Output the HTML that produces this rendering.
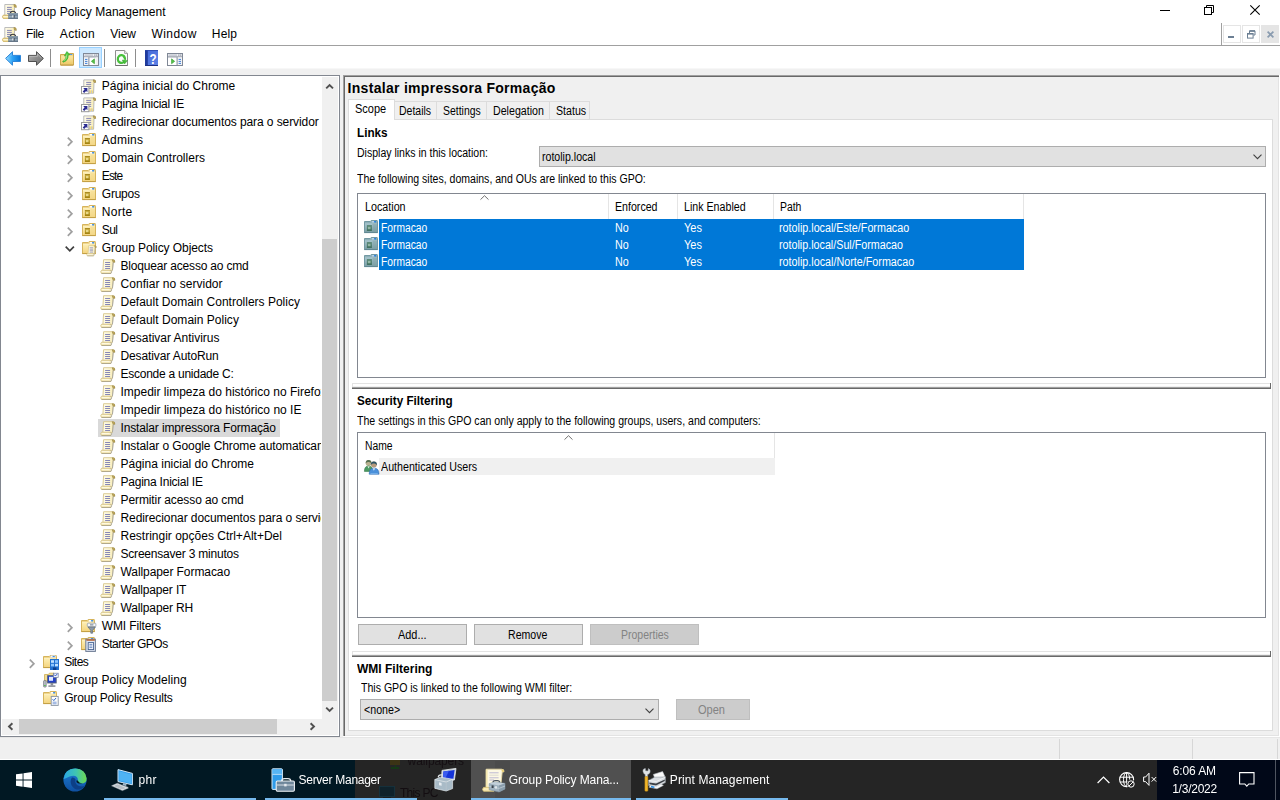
<!DOCTYPE html>
<html lang="pt">
<head>
<meta charset="utf-8">
<title>Group Policy Management</title>
<style>
html,body{margin:0;padding:0}
body{width:1280px;height:800px;overflow:hidden;position:relative;background:#f0f0f0;
 font-family:"Liberation Sans",sans-serif;font-size:12px;color:#000}
body>div{position:absolute;left:0;top:0;width:0;height:0}
body>div div,.i,.t{position:absolute;box-sizing:border-box}
.t{white-space:pre;line-height:16px;height:16px;margin:0;font-weight:400;font-size:12px;transform-origin:0 0}
.i{display:block;overflow:visible}
.clip{overflow:hidden}
#taskbar{will-change:transform}
</style>
</head>
<body>
<div id="title">
<svg class="i" width="0" height="0" style="left:0;top:0"><defs><linearGradient id="gfold" x1="0" y1="0" x2="0" y2="1"><stop offset="0" stop-color="#fdeeb4"/><stop offset="1" stop-color="#f4d580"/></linearGradient><linearGradient id="gfold2" x1="0" y1="0" x2="0" y2="1"><stop offset="0" stop-color="#a9c6cf"/><stop offset="1" stop-color="#7b9fa6"/></linearGradient><linearGradient id="gou" x1="0" y1="0" x2="0" y2="1"><stop offset="0" stop-color="#cfb040"/><stop offset="1" stop-color="#a07f0c"/></linearGradient><linearGradient id="gou2" x1="0" y1="0" x2="0" y2="1"><stop offset="0" stop-color="#5f8d7c"/><stop offset="1" stop-color="#3f6f5f"/></linearGradient><linearGradient id="gpaper" x1="0" y1="0" x2="1" y2="0"><stop offset="0" stop-color="#fefbea"/><stop offset="0.55" stop-color="#fcf5d2"/><stop offset="1" stop-color="#f7e9a6"/></linearGradient></defs></svg>
<div style="left:0px;top:0px;width:1280px;height:22px;background:#fff;"></div>
<svg class="i" style="left:2px;top:3px" width="16" height="16" viewBox="0 0 16 16" ><path d="M2.8 1.5 H11.6 Q14 1.3 13.8 3.6 L12.6 3.8 L12.2 12.6 H2.8 Z" fill="url(#gpaper)" stroke="#b6b6b6" stroke-width="0.9"/><path d="M11.8 1.5 Q14.8 1.2 14.3 4.4 L12.5 4 Z" fill="#cdb25c" stroke="#94803e" stroke-width="0.6"/><path d="M5 4.4H9.8M5 6.4H9.8M5 8.4H9.8M5 10.4H8" stroke="#8686b6" stroke-width="1"/><path d="M1.2 12.2 H7 V15.4 H1.2 Q-0.2 13.8 1.2 12.2 Z" fill="#f6e6a8" stroke="#c9a94f" stroke-width="0.8"/><path d="M1.4 13.6 H6.4" stroke="#fff7d6" stroke-width="1"/><path d="M8.3 10.4 Q8.5 8.3 11 8.3 Q13.4 8.3 13.7 10.4" fill="none" stroke="#3a3a3a" stroke-width="1.1"/><rect x="6.3" y="10.3" width="9.7" height="5.6" fill="#73879a"/><rect x="6.3" y="10.3" width="9.7" height="1.2" fill="#8497a8"/><rect x="6.9" y="13.1" width="8.5" height="1.3" fill="#9db0bf"/><rect x="6.3" y="15.2" width="9.7" height="0.8" fill="#5f7182"/><rect x="10.3" y="12.4" width="1.5" height="2" fill="#f4f6f8"/><rect x="11.6" y="12.2" width="1" height="2.6" fill="#39434d"/></svg>
<span class="t" style="left:22.8px;top:4px;letter-spacing:0.028px;">Group Policy Management</span>
<svg class="i" style="left:1160px;top:10px" width="10" height="1" viewBox="0 0 10 1" ><rect width="10" height="1" fill="#000"/></svg>
<svg class="i" style="left:1204px;top:5px" width="10" height="10" viewBox="0 0 10 10" ><path d="M2.5 2.5 V0.5 H9.5 V7.5 H7.5" fill="none" stroke="#000" stroke-width="1"/><rect x="0.5" y="2.5" width="7" height="7" fill="none" stroke="#000"/></svg>
<svg class="i" style="left:1250px;top:5px" width="10" height="10" viewBox="0 0 10 10" ><path d="M0.3 0.3 L9.7 9.7 M9.7 0.3 L0.3 9.7" stroke="#000" stroke-width="1.1"/></svg>
</div>
<div id="menu">
<div style="left:0px;top:22px;width:1280px;height:23px;background:#fff;"></div>
<div style="left:0px;top:45px;width:1280px;height:1px;background:#a0a0a0;"></div>
<svg class="i" style="left:2px;top:26px" width="16" height="16" viewBox="0 0 16 16" ><path d="M2.8 1.5 H11.6 Q14 1.3 13.8 3.6 L12.6 3.8 L12.2 12.6 H2.8 Z" fill="url(#gpaper)" stroke="#b6b6b6" stroke-width="0.9"/><path d="M11.8 1.5 Q14.8 1.2 14.3 4.4 L12.5 4 Z" fill="#cdb25c" stroke="#94803e" stroke-width="0.6"/><path d="M5 4.4H9.8M5 6.4H9.8M5 8.4H9.8M5 10.4H8" stroke="#8686b6" stroke-width="1"/><path d="M1.2 12.2 H7 V15.4 H1.2 Q-0.2 13.8 1.2 12.2 Z" fill="#f6e6a8" stroke="#c9a94f" stroke-width="0.8"/><path d="M1.4 13.6 H6.4" stroke="#fff7d6" stroke-width="1"/><path d="M8.3 10.4 Q8.5 8.3 11 8.3 Q13.4 8.3 13.7 10.4" fill="none" stroke="#3a3a3a" stroke-width="1.1"/><rect x="6.3" y="10.3" width="9.7" height="5.6" fill="#73879a"/><rect x="6.3" y="10.3" width="9.7" height="1.2" fill="#8497a8"/><rect x="6.9" y="13.1" width="8.5" height="1.3" fill="#9db0bf"/><rect x="6.3" y="15.2" width="9.7" height="0.8" fill="#5f7182"/><rect x="10.3" y="12.4" width="1.5" height="2" fill="#f4f6f8"/><rect x="11.6" y="12.2" width="1" height="2.6" fill="#39434d"/></svg>
<span class="t" style="left:26.0px;top:26px;letter-spacing:-0.381px;">File</span>
<span class="t" style="left:59.8px;top:26px;letter-spacing:0.328px;">Action</span>
<span class="t" style="left:110.2px;top:26px;">View</span>
<span class="t" style="left:151.5px;top:26px;letter-spacing:0.423px;">Window</span>
<span class="t" style="left:211.8px;top:26px;letter-spacing:0.171px;">Help</span>
<div style="left:1221px;top:23px;width:1px;height:23px;background:#a0a0a0;"></div>
<div style="left:1222px;top:23px;width:58px;height:22px;background:#fff;"></div>
<div style="left:1223px;top:25px;width:18px;height:18px;background:#fff;border:1px solid #e5e5e5;"></div>
<div style="left:1242px;top:25px;width:18px;height:18px;background:#fff;border:1px solid #e5e5e5;"></div>
<div style="left:1261px;top:25px;width:18px;height:18px;background:#e5e5e5;"></div>
<svg class="i" style="left:1228px;top:36px" width="6" height="2" viewBox="0 0 6 2" ><rect width="6" height="2" fill="#6b7f93"/></svg>
<svg class="i" style="left:1247px;top:30px" width="9" height="9" viewBox="0 0 9 9" ><path d="M2.5 3 V0.9 H8 V5 H6.4" fill="none" stroke="#6b7f93" stroke-width="1"/><path d="M2.5 1 H8" stroke="#6b7f93" stroke-width="1.6"/><rect x="0.5" y="3.5" width="5.6" height="4.6" fill="#fff" stroke="#6b7f93"/><path d="M0.5 3.8 H6.1" stroke="#6b7f93" stroke-width="1.6"/></svg>
<svg class="i" style="left:1267px;top:31px" width="7" height="7" viewBox="0 0 7 7" ><path d="M0.6 0.6 L6.4 6.4 M6.4 0.6 L0.6 6.4" stroke="#8a9cb0" stroke-width="1.7"/></svg>
</div>
<div id="toolbar">
<div style="left:0px;top:46px;width:1280px;height:22px;background:#fff;"></div>
<div style="left:0px;top:68px;width:1280px;height:1px;background:#f7f7f7;"></div>
<svg class="i" style="left:5px;top:51px" width="16" height="15" viewBox="0 0 16 15" ><defs><linearGradient id="gbk" x1="0" y1="0" x2="1" y2="0"><stop offset="0" stop-color="#9bdcff"/><stop offset="0.45" stop-color="#2fa5f7"/><stop offset="1" stop-color="#0672d6"/></linearGradient><linearGradient id="gbk2" x1="0" y1="0" x2="0" y2="1"><stop offset="0" stop-color="#fff" stop-opacity="0.55"/><stop offset="0.5" stop-color="#fff" stop-opacity="0"/></linearGradient></defs><path d="M0.6 7.4 L7.5 0.7 V4.4 H15.5 V10.5 H7.5 V14.2 Z" fill="url(#gbk)" stroke="#2f86d8" stroke-width="1" stroke-linejoin="round"/><path d="M2 7.4 L6.7 2.9 V5.3 H14.6 V7.4 Z" fill="url(#gbk2)"/></svg>
<svg class="i" style="left:28px;top:51px" width="16" height="15" viewBox="0 0 16 15" ><defs><linearGradient id="gfw" x1="0" y1="0" x2="1" y2="1"><stop offset="0" stop-color="#b9b9b9"/><stop offset="0.5" stop-color="#8e8e8e"/><stop offset="1" stop-color="#6f6f6f"/></linearGradient></defs><path d="M15.4 7.4 L8.5 0.7 V4.4 H0.5 V10.5 H8.5 V14.2 Z" fill="url(#gfw)" stroke="#4f4f4f" stroke-width="1" stroke-linejoin="round"/><path d="M1.5 5.4 H9.4 V3 L13.6 7.2" fill="none" stroke="#d0d0d0" stroke-width="0.7" opacity="0.7"/></svg>
<div style="left:50px;top:49px;width:1px;height:18px;background:#8d8d8d;"></div>
<svg class="i" style="left:60px;top:51px" width="14" height="15" viewBox="0 0 14 15" ><defs><linearGradient id="gup" x1="0" y1="0" x2="0" y2="1"><stop offset="0" stop-color="#fbe7a6"/><stop offset="1" stop-color="#edc968"/></linearGradient></defs><path d="M0.5 3.5 H8.6 L9.6 2.5 H13.5 V14 H0.5 Z" fill="#f0d88a" stroke="#cfa94e" stroke-width="1"/><path d="M1.2 5.2 H12.8 V13.3 H1.2 Z" fill="url(#gup)"/><path d="M0.6 14.1 H13.4" stroke="#b98f36" stroke-width="0.9"/><rect x="9.8" y="2.9" width="2.6" height="1.2" rx="0.5" fill="#4a9bf0"/><path d="M2.6 10.4 Q6 9 6.2 4.6 L4.4 5 L6.8 0.6 L10 3.6 L8.2 3.9 Q8.4 9.6 3.2 11.2 Z" fill="#52cf42" stroke="#2f9a2a" stroke-width="0.6" stroke-linejoin="round"/><path d="M4 9.8 Q6.8 8 6.9 3.4" fill="none" stroke="#b6f0a8" stroke-width="0.7"/></svg>
<div style="left:79px;top:47px;width:23px;height:21px;background:#cce8ff;border:1px solid #99d1ff;"></div>
<svg class="i" style="left:83px;top:53px" width="16" height="13" viewBox="0 0 16 13" ><rect x="0.5" y="0.5" width="15" height="12" fill="#fff" stroke="#808896" stroke-width="1"/><rect x="1" y="1" width="14" height="2.4" fill="#eceef2"/><path d="M1 3.9 H15" stroke="#808896" stroke-width="1"/><path d="M1.6 2.1 H10" stroke="#aab0bb" stroke-width="0.9"/><rect x="11.3" y="1.5" width="1.1" height="1.2" fill="#808896"/><rect x="13.2" y="1.5" width="1.1" height="1.2" fill="#808896"/><rect x="1" y="4.4" width="4.4" height="7.6" fill="#f3f4f7"/><path d="M5.9 4.3 V12.4" stroke="#808896" stroke-width="1"/><path d="M2 6.4H4.4M2 8.4H4.4M2 10.4H4.4" stroke="#3d7fd6" stroke-width="1"/><path d="M11.4 5.9 V10.7 L8.4 8.3 Z" fill="#58c24c" stroke="#35a02e" stroke-width="0.7" stroke-linejoin="round"/><rect x="12.6" y="4.4" width="2.4" height="7.6" fill="#f1f1f1"/></svg>
<div style="left:104px;top:49px;width:1px;height:18px;background:#8d8d8d;"></div>
<svg class="i" style="left:115px;top:50px" width="13" height="16" viewBox="0 0 13 16" ><path d="M0.5 0.5 H9.6 L12.5 3.4 V15.5 H0.5 Z" fill="#fbfbfb" stroke="#8e8e8e" stroke-width="1"/><path d="M9.6 0.5 V3.4 H12.5" fill="#ededed" stroke="#8e8e8e" stroke-width="0.8"/><path d="M0.5 15.5 H12.5" stroke="#6f6f6f" stroke-width="1"/><path d="M9.6 6.9 A3.7 3.9 0 1 0 9.9 10.6" fill="none" stroke="#48c03c" stroke-width="2.2"/><path d="M8.2 6 A3.6 3.6 0 0 1 9.9 9.8" fill="none" stroke="#48c03c" stroke-width="2.2"/><path d="M7.2 10 L12.6 10.4 L9.6 14 Z" fill="#48c03c" stroke="#2f9a2a" stroke-width="0.4"/></svg>
<div style="left:135px;top:49px;width:1px;height:18px;background:#8d8d8d;"></div>
<svg class="i" style="left:145px;top:50px" width="13" height="16" viewBox="0 0 13 16" ><defs><linearGradient id="ghp" x1="0" y1="0" x2="1" y2="1"><stop offset="0" stop-color="#4468d8"/><stop offset="1" stop-color="#5d82e6"/></linearGradient></defs><rect x="0" y="0" width="13" height="16" fill="url(#ghp)"/><rect x="0" y="0" width="2.8" height="16" fill="#1f3a9c"/><rect x="0" y="0" width="13" height="0.8" fill="#2a46ad"/><rect x="0" y="15" width="13" height="1" fill="#1c2f80"/><text x="10" y="14" font-family="Liberation Sans, sans-serif" font-weight="700" font-size="14.5" fill="#fff" text-anchor="middle" transform="scale(0.8,1)">?</text></svg>
<svg class="i" style="left:167px;top:53px" width="16" height="13" viewBox="0 0 16 13" ><rect x="0.5" y="0.5" width="15" height="12" fill="#fff" stroke="#808896" stroke-width="1"/><rect x="1" y="1" width="14" height="2.4" fill="#eceef2"/><path d="M1 3.9 H15" stroke="#808896" stroke-width="1"/><path d="M1.6 2.1 H10" stroke="#aab0bb" stroke-width="0.9"/><rect x="11.3" y="1.5" width="1.1" height="1.2" fill="#808896"/><rect x="13.2" y="1.5" width="1.1" height="1.2" fill="#808896"/><rect x="10.6" y="4.4" width="4.4" height="7.6" fill="#f3f4f7"/><path d="M10.1 4.3 V12.4" stroke="#808896" stroke-width="1"/><path d="M11.6 6.4H14M11.6 8.4H14M11.6 10.4H14" stroke="#3d7fd6" stroke-width="1"/><path d="M4.6 5.9 V10.7 L7.6 8.3 Z" fill="#58c24c" stroke="#35a02e" stroke-width="0.7" stroke-linejoin="round"/></svg>
</div>
<div id="tree">
<div style="left:0px;top:75px;width:340px;height:662px;background:#fff;border:1px solid #828790;"></div>
<div style="left:322px;top:77px;width:16px;height:642px;background:#f0f0f0;"></div>
<div style="left:322px;top:239px;width:15px;height:462px;background:#cdcdcd;"></div>
<svg class="i" style="left:325px;top:82.6px" width="9" height="7" viewBox="0 0 9 7" ><path d="M1.2 5.4 L4.6 2 L8 5.4" fill="none" stroke="#505050" stroke-width="1.9"/></svg>
<svg class="i" style="left:325px;top:706.4px" width="9" height="7" viewBox="0 0 9 7" ><path d="M1.2 1.6 L4.6 5 L8 1.6" fill="none" stroke="#505050" stroke-width="1.9"/></svg>
<div style="left:2px;top:719px;width:336px;height:16px;background:#f0f0f0;"></div>
<div style="left:19px;top:719px;width:258px;height:15px;background:#cdcdcd;"></div>
<svg class="i" style="left:6.6px;top:722px" width="7" height="9" viewBox="0 0 7 9" ><path d="M5.4 1.2 L2 4.5 L5.4 7.8" fill="none" stroke="#505050" stroke-width="1.9"/></svg>
<svg class="i" style="left:309px;top:722px" width="7" height="9" viewBox="0 0 7 9" ><path d="M1.6 1.2 L5 4.5 L1.6 7.8" fill="none" stroke="#505050" stroke-width="1.9"/></svg>
<div class="clip" style="left:1px;top:76px;width:320px;height:643px">
<svg class="i" style="left:80px;top:2px" width="16" height="16" viewBox="0 0 16 16" ><path d="M2.8 1.9 H12 Q14.6 1.6 14.4 4 L13 4.3 L12.6 15.2 H2.8 Z" fill="url(#gpaper)" stroke="#b2b2b2" stroke-width="0.9"/><path d="M12.3 1.8 Q15.1 1.4 14.6 4.5 L12.9 4.2 Z" fill="#cdb25c" stroke="#94803e" stroke-width="0.6"/><path d="M5.2 4.4H10.2M5.2 6.4H10.2M5.2 8.4H10.2M5.2 10.4H10.2" stroke="#8686b6" stroke-width="1"/><rect x="8.4" y="12.4" width="3.6" height="2.6" fill="#f5dc7c"/><rect x="10" y="12.6" width="1" height="2.4" fill="#c9c9c9"/><rect x="0.5" y="8.5" width="7.4" height="7.2" fill="#fff" stroke="#9b9b9b" stroke-width="1"/><path d="M2.2 10.1 H6.4 V14.3 L5.1 13 L3.2 14.9 L1.7 13.4 L3.6 11.5 Z" fill="#2b2b90"/></svg>
<span class="t" style="left:100.8px;top:2px;letter-spacing:0.004px;">Página inicial do Chrome</span>
<svg class="i" style="left:80px;top:20px" width="16" height="16" viewBox="0 0 16 16" ><path d="M2.8 1.9 H12 Q14.6 1.6 14.4 4 L13 4.3 L12.6 15.2 H2.8 Z" fill="url(#gpaper)" stroke="#b2b2b2" stroke-width="0.9"/><path d="M12.3 1.8 Q15.1 1.4 14.6 4.5 L12.9 4.2 Z" fill="#cdb25c" stroke="#94803e" stroke-width="0.6"/><path d="M5.2 4.4H10.2M5.2 6.4H10.2M5.2 8.4H10.2M5.2 10.4H10.2" stroke="#8686b6" stroke-width="1"/><rect x="8.4" y="12.4" width="3.6" height="2.6" fill="#f5dc7c"/><rect x="10" y="12.6" width="1" height="2.4" fill="#c9c9c9"/><rect x="0.5" y="8.5" width="7.4" height="7.2" fill="#fff" stroke="#9b9b9b" stroke-width="1"/><path d="M2.2 10.1 H6.4 V14.3 L5.1 13 L3.2 14.9 L1.7 13.4 L3.6 11.5 Z" fill="#2b2b90"/></svg>
<span class="t" style="left:100.8px;top:20px;letter-spacing:-0.229px;">Pagina Inicial IE</span>
<svg class="i" style="left:80px;top:38px" width="16" height="16" viewBox="0 0 16 16" ><path d="M2.8 1.9 H12 Q14.6 1.6 14.4 4 L13 4.3 L12.6 15.2 H2.8 Z" fill="url(#gpaper)" stroke="#b2b2b2" stroke-width="0.9"/><path d="M12.3 1.8 Q15.1 1.4 14.6 4.5 L12.9 4.2 Z" fill="#cdb25c" stroke="#94803e" stroke-width="0.6"/><path d="M5.2 4.4H10.2M5.2 6.4H10.2M5.2 8.4H10.2M5.2 10.4H10.2" stroke="#8686b6" stroke-width="1"/><rect x="8.4" y="12.4" width="3.6" height="2.6" fill="#f5dc7c"/><rect x="10" y="12.6" width="1" height="2.4" fill="#c9c9c9"/><rect x="0.5" y="8.5" width="7.4" height="7.2" fill="#fff" stroke="#9b9b9b" stroke-width="1"/><path d="M2.2 10.1 H6.4 V14.3 L5.1 13 L3.2 14.9 L1.7 13.4 L3.6 11.5 Z" fill="#2b2b90"/></svg>
<span class="t" style="left:100.8px;top:38px;letter-spacing:-0.082px;">Redirecionar documentos para o servidor</span>
<svg class="i" style="left:66px;top:61px" width="6" height="10" viewBox="0 0 6 10" ><path d="M0.8 0.6 L4.9 4.7 L0.8 8.8" fill="none" stroke="#a0a0a0" stroke-width="1.7"/></svg>
<svg class="i" style="left:80px;top:56px" width="16" height="16" viewBox="0 0 16 16" ><path d="M1.5 2.5 H7.2 L8.2 1.5 H14 Q14.5 1.5 14.5 2.3 V13.5 H1.5 Z" fill="#efd488" stroke="#d6b45c" stroke-width="1"/><path d="M2 4.3 H14 V13 H2 Z" fill="url(#gfold)"/><path d="M9.6 4.6 H14 V13 H9.6 Z" fill="#f3d88c" opacity="0.55"/><path d="M2 4.4 H7.6 L8.4 3.9 H14" fill="none" stroke="#fff6cf" stroke-width="0.7"/><path d="M1.2 13.6 H14.8" stroke="#c39f45" stroke-width="1"/><rect x="8.8" y="2.1" width="3.2" height="1.4" rx="0.5" fill="#fff"/><rect x="11" y="2.1" width="2.2" height="1.4" rx="0.6" fill="#3d8ee6"/><rect x="3.9" y="6" width="5" height="6" fill="url(#gou)"/><rect x="3.9" y="6" width="5" height="0.8" fill="#8f7210" opacity="0.7"/><rect x="4.9" y="7.8" width="2.6" height="2.4" fill="#f2e49a" opacity="0.85"/></svg>
<span class="t" style="left:100.8px;top:56px;letter-spacing:0.237px;">Admins</span>
<svg class="i" style="left:66px;top:79px" width="6" height="10" viewBox="0 0 6 10" ><path d="M0.8 0.6 L4.9 4.7 L0.8 8.8" fill="none" stroke="#a0a0a0" stroke-width="1.7"/></svg>
<svg class="i" style="left:80px;top:74px" width="16" height="16" viewBox="0 0 16 16" ><path d="M1.5 2.5 H7.2 L8.2 1.5 H14 Q14.5 1.5 14.5 2.3 V13.5 H1.5 Z" fill="#efd488" stroke="#d6b45c" stroke-width="1"/><path d="M2 4.3 H14 V13 H2 Z" fill="url(#gfold)"/><path d="M9.6 4.6 H14 V13 H9.6 Z" fill="#f3d88c" opacity="0.55"/><path d="M2 4.4 H7.6 L8.4 3.9 H14" fill="none" stroke="#fff6cf" stroke-width="0.7"/><path d="M1.2 13.6 H14.8" stroke="#c39f45" stroke-width="1"/><rect x="8.8" y="2.1" width="3.2" height="1.4" rx="0.5" fill="#fff"/><rect x="11" y="2.1" width="2.2" height="1.4" rx="0.6" fill="#3d8ee6"/><rect x="3.9" y="6" width="5" height="6" fill="url(#gou)"/><rect x="3.9" y="6" width="5" height="0.8" fill="#8f7210" opacity="0.7"/><rect x="4.9" y="7.8" width="2.6" height="2.4" fill="#f2e49a" opacity="0.85"/></svg>
<span class="t" style="left:100.8px;top:74px;letter-spacing:0.029px;">Domain Controllers</span>
<svg class="i" style="left:66px;top:97px" width="6" height="10" viewBox="0 0 6 10" ><path d="M0.8 0.6 L4.9 4.7 L0.8 8.8" fill="none" stroke="#a0a0a0" stroke-width="1.7"/></svg>
<svg class="i" style="left:80px;top:92px" width="16" height="16" viewBox="0 0 16 16" ><path d="M1.5 2.5 H7.2 L8.2 1.5 H14 Q14.5 1.5 14.5 2.3 V13.5 H1.5 Z" fill="#efd488" stroke="#d6b45c" stroke-width="1"/><path d="M2 4.3 H14 V13 H2 Z" fill="url(#gfold)"/><path d="M9.6 4.6 H14 V13 H9.6 Z" fill="#f3d88c" opacity="0.55"/><path d="M2 4.4 H7.6 L8.4 3.9 H14" fill="none" stroke="#fff6cf" stroke-width="0.7"/><path d="M1.2 13.6 H14.8" stroke="#c39f45" stroke-width="1"/><rect x="8.8" y="2.1" width="3.2" height="1.4" rx="0.5" fill="#fff"/><rect x="11" y="2.1" width="2.2" height="1.4" rx="0.6" fill="#3d8ee6"/><rect x="3.9" y="6" width="5" height="6" fill="url(#gou)"/><rect x="3.9" y="6" width="5" height="0.8" fill="#8f7210" opacity="0.7"/><rect x="4.9" y="7.8" width="2.6" height="2.4" fill="#f2e49a" opacity="0.85"/></svg>
<span class="t" style="left:100.8px;top:92px;letter-spacing:-0.839px;">Este</span>
<svg class="i" style="left:66px;top:115px" width="6" height="10" viewBox="0 0 6 10" ><path d="M0.8 0.6 L4.9 4.7 L0.8 8.8" fill="none" stroke="#a0a0a0" stroke-width="1.7"/></svg>
<svg class="i" style="left:80px;top:110px" width="16" height="16" viewBox="0 0 16 16" ><path d="M1.5 2.5 H7.2 L8.2 1.5 H14 Q14.5 1.5 14.5 2.3 V13.5 H1.5 Z" fill="#efd488" stroke="#d6b45c" stroke-width="1"/><path d="M2 4.3 H14 V13 H2 Z" fill="url(#gfold)"/><path d="M9.6 4.6 H14 V13 H9.6 Z" fill="#f3d88c" opacity="0.55"/><path d="M2 4.4 H7.6 L8.4 3.9 H14" fill="none" stroke="#fff6cf" stroke-width="0.7"/><path d="M1.2 13.6 H14.8" stroke="#c39f45" stroke-width="1"/><rect x="8.8" y="2.1" width="3.2" height="1.4" rx="0.5" fill="#fff"/><rect x="11" y="2.1" width="2.2" height="1.4" rx="0.6" fill="#3d8ee6"/><rect x="3.9" y="6" width="5" height="6" fill="url(#gou)"/><rect x="3.9" y="6" width="5" height="0.8" fill="#8f7210" opacity="0.7"/><rect x="4.9" y="7.8" width="2.6" height="2.4" fill="#f2e49a" opacity="0.85"/></svg>
<span class="t" style="left:100.8px;top:110px;letter-spacing:-0.232px;">Grupos</span>
<svg class="i" style="left:66px;top:133px" width="6" height="10" viewBox="0 0 6 10" ><path d="M0.8 0.6 L4.9 4.7 L0.8 8.8" fill="none" stroke="#a0a0a0" stroke-width="1.7"/></svg>
<svg class="i" style="left:80px;top:128px" width="16" height="16" viewBox="0 0 16 16" ><path d="M1.5 2.5 H7.2 L8.2 1.5 H14 Q14.5 1.5 14.5 2.3 V13.5 H1.5 Z" fill="#efd488" stroke="#d6b45c" stroke-width="1"/><path d="M2 4.3 H14 V13 H2 Z" fill="url(#gfold)"/><path d="M9.6 4.6 H14 V13 H9.6 Z" fill="#f3d88c" opacity="0.55"/><path d="M2 4.4 H7.6 L8.4 3.9 H14" fill="none" stroke="#fff6cf" stroke-width="0.7"/><path d="M1.2 13.6 H14.8" stroke="#c39f45" stroke-width="1"/><rect x="8.8" y="2.1" width="3.2" height="1.4" rx="0.5" fill="#fff"/><rect x="11" y="2.1" width="2.2" height="1.4" rx="0.6" fill="#3d8ee6"/><rect x="3.9" y="6" width="5" height="6" fill="url(#gou)"/><rect x="3.9" y="6" width="5" height="0.8" fill="#8f7210" opacity="0.7"/><rect x="4.9" y="7.8" width="2.6" height="2.4" fill="#f2e49a" opacity="0.85"/></svg>
<span class="t" style="left:100.8px;top:128px;letter-spacing:0.289px;">Norte</span>
<svg class="i" style="left:66px;top:151px" width="6" height="10" viewBox="0 0 6 10" ><path d="M0.8 0.6 L4.9 4.7 L0.8 8.8" fill="none" stroke="#a0a0a0" stroke-width="1.7"/></svg>
<svg class="i" style="left:80px;top:146px" width="16" height="16" viewBox="0 0 16 16" ><path d="M1.5 2.5 H7.2 L8.2 1.5 H14 Q14.5 1.5 14.5 2.3 V13.5 H1.5 Z" fill="#efd488" stroke="#d6b45c" stroke-width="1"/><path d="M2 4.3 H14 V13 H2 Z" fill="url(#gfold)"/><path d="M9.6 4.6 H14 V13 H9.6 Z" fill="#f3d88c" opacity="0.55"/><path d="M2 4.4 H7.6 L8.4 3.9 H14" fill="none" stroke="#fff6cf" stroke-width="0.7"/><path d="M1.2 13.6 H14.8" stroke="#c39f45" stroke-width="1"/><rect x="8.8" y="2.1" width="3.2" height="1.4" rx="0.5" fill="#fff"/><rect x="11" y="2.1" width="2.2" height="1.4" rx="0.6" fill="#3d8ee6"/><rect x="3.9" y="6" width="5" height="6" fill="url(#gou)"/><rect x="3.9" y="6" width="5" height="0.8" fill="#8f7210" opacity="0.7"/><rect x="4.9" y="7.8" width="2.6" height="2.4" fill="#f2e49a" opacity="0.85"/></svg>
<span class="t" style="left:100.8px;top:146px;letter-spacing:-0.672px;">Sul</span>
<svg class="i" style="left:63.8px;top:170.1px" width="10" height="6" viewBox="0 0 10 6" ><path d="M0.7 0.7 L4.8 4.8 L8.9 0.7" fill="none" stroke="#404040" stroke-width="1.7"/></svg>
<svg class="i" style="left:80px;top:164px" width="16" height="16" viewBox="0 0 16 16" ><path d="M1.5 2.5 H7.2 L8.2 1.5 H14 Q14.5 1.5 14.5 2.3 V13.5 H1.5 Z" fill="#efd488" stroke="#d6b45c" stroke-width="1"/><path d="M2 4.3 H14 V13 H2 Z" fill="url(#gfold)"/><path d="M9.6 4.6 H14 V13 H9.6 Z" fill="#f3d88c" opacity="0.55"/><path d="M2 4.4 H7.6 L8.4 3.9 H14" fill="none" stroke="#fff6cf" stroke-width="0.7"/><path d="M1.2 13.6 H14.8" stroke="#c39f45" stroke-width="1"/><rect x="8.8" y="2.1" width="3.2" height="1.4" rx="0.5" fill="#fff"/><rect x="11" y="2.1" width="2.2" height="1.4" rx="0.6" fill="#3d8ee6"/><g transform="translate(5.2,4.4) scale(0.68,0.74)"><path d="M3.6 1.7 H12.4 Q14.9 1.4 14.7 3.9 L13.2 4.1 L12.4 12.4 H2.9 Z" fill="url(#gpaper)" stroke="#d2bf7e" stroke-width="0.8"/><path d="M13.25 4.1 L12.45 12.3" stroke="#a5a5a5" stroke-width="0.9"/><path d="M12.3 1.7 Q15.2 1.3 14.8 4.3 L13 4 Z" fill="#d3b862" stroke="#8f7d40" stroke-width="0.6"/><path d="M5.1 4.5H10.1M5.1 6.5H10.1M5.1 8.5H10.1M5.1 10.5H10.1" stroke="#8888b6" stroke-width="1"/><path d="M1.5 12.3 H11 Q12.4 13.8 11 15.4 H1.5 Q-0.1 13.8 1.5 12.3 Z" fill="#f9edbd" stroke="#d2bf7e" stroke-width="0.8"/><path d="M1.8 13.4 H9.6" stroke="#fffbe8" stroke-width="0.9"/><path d="M1.6 15.5 H11" stroke="#a79f86" stroke-width="0.8"/><path d="M10.9 12.5 Q12.3 13.8 10.9 15.3" fill="#e9e9e9" stroke="#9c9c9c" stroke-width="0.7"/></g></svg>
<span class="t" style="left:100.8px;top:164px;letter-spacing:-0.080px;">Group Policy Objects</span>
<svg class="i" style="left:99px;top:182px" width="16" height="16" viewBox="0 0 16 16" ><path d="M3.6 1.7 H12.4 Q14.9 1.4 14.7 3.9 L13.2 4.1 L12.4 12.4 H2.9 Z" fill="url(#gpaper)" stroke="#d2bf7e" stroke-width="0.8"/><path d="M13.25 4.1 L12.45 12.3" stroke="#a5a5a5" stroke-width="0.9"/><path d="M12.3 1.7 Q15.2 1.3 14.8 4.3 L13 4 Z" fill="#d3b862" stroke="#8f7d40" stroke-width="0.6"/><path d="M5.1 4.5H10.1M5.1 6.5H10.1M5.1 8.5H10.1M5.1 10.5H10.1" stroke="#8888b6" stroke-width="1"/><path d="M1.5 12.3 H11 Q12.4 13.8 11 15.4 H1.5 Q-0.1 13.8 1.5 12.3 Z" fill="#f9edbd" stroke="#d2bf7e" stroke-width="0.8"/><path d="M1.8 13.4 H9.6" stroke="#fffbe8" stroke-width="0.9"/><path d="M1.6 15.5 H11" stroke="#a79f86" stroke-width="0.8"/><path d="M10.9 12.5 Q12.3 13.8 10.9 15.3" fill="#e9e9e9" stroke="#9c9c9c" stroke-width="0.7"/></svg>
<span class="t" style="left:119.5px;top:182px;letter-spacing:-0.180px;">Bloquear acesso ao cmd</span>
<svg class="i" style="left:99px;top:200px" width="16" height="16" viewBox="0 0 16 16" ><path d="M3.6 1.7 H12.4 Q14.9 1.4 14.7 3.9 L13.2 4.1 L12.4 12.4 H2.9 Z" fill="url(#gpaper)" stroke="#d2bf7e" stroke-width="0.8"/><path d="M13.25 4.1 L12.45 12.3" stroke="#a5a5a5" stroke-width="0.9"/><path d="M12.3 1.7 Q15.2 1.3 14.8 4.3 L13 4 Z" fill="#d3b862" stroke="#8f7d40" stroke-width="0.6"/><path d="M5.1 4.5H10.1M5.1 6.5H10.1M5.1 8.5H10.1M5.1 10.5H10.1" stroke="#8888b6" stroke-width="1"/><path d="M1.5 12.3 H11 Q12.4 13.8 11 15.4 H1.5 Q-0.1 13.8 1.5 12.3 Z" fill="#f9edbd" stroke="#d2bf7e" stroke-width="0.8"/><path d="M1.8 13.4 H9.6" stroke="#fffbe8" stroke-width="0.9"/><path d="M1.6 15.5 H11" stroke="#a79f86" stroke-width="0.8"/><path d="M10.9 12.5 Q12.3 13.8 10.9 15.3" fill="#e9e9e9" stroke="#9c9c9c" stroke-width="0.7"/></svg>
<span class="t" style="left:119.5px;top:200px;letter-spacing:0.039px;">Confiar no servidor</span>
<svg class="i" style="left:99px;top:218px" width="16" height="16" viewBox="0 0 16 16" ><path d="M3.6 1.7 H12.4 Q14.9 1.4 14.7 3.9 L13.2 4.1 L12.4 12.4 H2.9 Z" fill="url(#gpaper)" stroke="#d2bf7e" stroke-width="0.8"/><path d="M13.25 4.1 L12.45 12.3" stroke="#a5a5a5" stroke-width="0.9"/><path d="M12.3 1.7 Q15.2 1.3 14.8 4.3 L13 4 Z" fill="#d3b862" stroke="#8f7d40" stroke-width="0.6"/><path d="M5.1 4.5H10.1M5.1 6.5H10.1M5.1 8.5H10.1M5.1 10.5H10.1" stroke="#8888b6" stroke-width="1"/><path d="M1.5 12.3 H11 Q12.4 13.8 11 15.4 H1.5 Q-0.1 13.8 1.5 12.3 Z" fill="#f9edbd" stroke="#d2bf7e" stroke-width="0.8"/><path d="M1.8 13.4 H9.6" stroke="#fffbe8" stroke-width="0.9"/><path d="M1.6 15.5 H11" stroke="#a79f86" stroke-width="0.8"/><path d="M10.9 12.5 Q12.3 13.8 10.9 15.3" fill="#e9e9e9" stroke="#9c9c9c" stroke-width="0.7"/></svg>
<span class="t" style="left:119.5px;top:218px;">Default Domain Controllers Policy</span>
<svg class="i" style="left:99px;top:236px" width="16" height="16" viewBox="0 0 16 16" ><path d="M3.6 1.7 H12.4 Q14.9 1.4 14.7 3.9 L13.2 4.1 L12.4 12.4 H2.9 Z" fill="url(#gpaper)" stroke="#d2bf7e" stroke-width="0.8"/><path d="M13.25 4.1 L12.45 12.3" stroke="#a5a5a5" stroke-width="0.9"/><path d="M12.3 1.7 Q15.2 1.3 14.8 4.3 L13 4 Z" fill="#d3b862" stroke="#8f7d40" stroke-width="0.6"/><path d="M5.1 4.5H10.1M5.1 6.5H10.1M5.1 8.5H10.1M5.1 10.5H10.1" stroke="#8888b6" stroke-width="1"/><path d="M1.5 12.3 H11 Q12.4 13.8 11 15.4 H1.5 Q-0.1 13.8 1.5 12.3 Z" fill="#f9edbd" stroke="#d2bf7e" stroke-width="0.8"/><path d="M1.8 13.4 H9.6" stroke="#fffbe8" stroke-width="0.9"/><path d="M1.6 15.5 H11" stroke="#a79f86" stroke-width="0.8"/><path d="M10.9 12.5 Q12.3 13.8 10.9 15.3" fill="#e9e9e9" stroke="#9c9c9c" stroke-width="0.7"/></svg>
<span class="t" style="left:119.5px;top:236px;letter-spacing:0.017px;">Default Domain Policy</span>
<svg class="i" style="left:99px;top:254px" width="16" height="16" viewBox="0 0 16 16" ><path d="M3.6 1.7 H12.4 Q14.9 1.4 14.7 3.9 L13.2 4.1 L12.4 12.4 H2.9 Z" fill="url(#gpaper)" stroke="#d2bf7e" stroke-width="0.8"/><path d="M13.25 4.1 L12.45 12.3" stroke="#a5a5a5" stroke-width="0.9"/><path d="M12.3 1.7 Q15.2 1.3 14.8 4.3 L13 4 Z" fill="#d3b862" stroke="#8f7d40" stroke-width="0.6"/><path d="M5.1 4.5H10.1M5.1 6.5H10.1M5.1 8.5H10.1M5.1 10.5H10.1" stroke="#8888b6" stroke-width="1"/><path d="M1.5 12.3 H11 Q12.4 13.8 11 15.4 H1.5 Q-0.1 13.8 1.5 12.3 Z" fill="#f9edbd" stroke="#d2bf7e" stroke-width="0.8"/><path d="M1.8 13.4 H9.6" stroke="#fffbe8" stroke-width="0.9"/><path d="M1.6 15.5 H11" stroke="#a79f86" stroke-width="0.8"/><path d="M10.9 12.5 Q12.3 13.8 10.9 15.3" fill="#e9e9e9" stroke="#9c9c9c" stroke-width="0.7"/></svg>
<span class="t" style="left:119.5px;top:254px;letter-spacing:-0.026px;">Desativar Antivirus</span>
<svg class="i" style="left:99px;top:272px" width="16" height="16" viewBox="0 0 16 16" ><path d="M3.6 1.7 H12.4 Q14.9 1.4 14.7 3.9 L13.2 4.1 L12.4 12.4 H2.9 Z" fill="url(#gpaper)" stroke="#d2bf7e" stroke-width="0.8"/><path d="M13.25 4.1 L12.45 12.3" stroke="#a5a5a5" stroke-width="0.9"/><path d="M12.3 1.7 Q15.2 1.3 14.8 4.3 L13 4 Z" fill="#d3b862" stroke="#8f7d40" stroke-width="0.6"/><path d="M5.1 4.5H10.1M5.1 6.5H10.1M5.1 8.5H10.1M5.1 10.5H10.1" stroke="#8888b6" stroke-width="1"/><path d="M1.5 12.3 H11 Q12.4 13.8 11 15.4 H1.5 Q-0.1 13.8 1.5 12.3 Z" fill="#f9edbd" stroke="#d2bf7e" stroke-width="0.8"/><path d="M1.8 13.4 H9.6" stroke="#fffbe8" stroke-width="0.9"/><path d="M1.6 15.5 H11" stroke="#a79f86" stroke-width="0.8"/><path d="M10.9 12.5 Q12.3 13.8 10.9 15.3" fill="#e9e9e9" stroke="#9c9c9c" stroke-width="0.7"/></svg>
<span class="t" style="left:119.5px;top:272px;letter-spacing:-0.110px;">Desativar AutoRun</span>
<svg class="i" style="left:99px;top:290px" width="16" height="16" viewBox="0 0 16 16" ><path d="M3.6 1.7 H12.4 Q14.9 1.4 14.7 3.9 L13.2 4.1 L12.4 12.4 H2.9 Z" fill="url(#gpaper)" stroke="#d2bf7e" stroke-width="0.8"/><path d="M13.25 4.1 L12.45 12.3" stroke="#a5a5a5" stroke-width="0.9"/><path d="M12.3 1.7 Q15.2 1.3 14.8 4.3 L13 4 Z" fill="#d3b862" stroke="#8f7d40" stroke-width="0.6"/><path d="M5.1 4.5H10.1M5.1 6.5H10.1M5.1 8.5H10.1M5.1 10.5H10.1" stroke="#8888b6" stroke-width="1"/><path d="M1.5 12.3 H11 Q12.4 13.8 11 15.4 H1.5 Q-0.1 13.8 1.5 12.3 Z" fill="#f9edbd" stroke="#d2bf7e" stroke-width="0.8"/><path d="M1.8 13.4 H9.6" stroke="#fffbe8" stroke-width="0.9"/><path d="M1.6 15.5 H11" stroke="#a79f86" stroke-width="0.8"/><path d="M10.9 12.5 Q12.3 13.8 10.9 15.3" fill="#e9e9e9" stroke="#9c9c9c" stroke-width="0.7"/></svg>
<span class="t" style="left:119.5px;top:290px;letter-spacing:-0.252px;">Esconde a unidade C:</span>
<svg class="i" style="left:99px;top:308px" width="16" height="16" viewBox="0 0 16 16" ><path d="M3.6 1.7 H12.4 Q14.9 1.4 14.7 3.9 L13.2 4.1 L12.4 12.4 H2.9 Z" fill="url(#gpaper)" stroke="#d2bf7e" stroke-width="0.8"/><path d="M13.25 4.1 L12.45 12.3" stroke="#a5a5a5" stroke-width="0.9"/><path d="M12.3 1.7 Q15.2 1.3 14.8 4.3 L13 4 Z" fill="#d3b862" stroke="#8f7d40" stroke-width="0.6"/><path d="M5.1 4.5H10.1M5.1 6.5H10.1M5.1 8.5H10.1M5.1 10.5H10.1" stroke="#8888b6" stroke-width="1"/><path d="M1.5 12.3 H11 Q12.4 13.8 11 15.4 H1.5 Q-0.1 13.8 1.5 12.3 Z" fill="#f9edbd" stroke="#d2bf7e" stroke-width="0.8"/><path d="M1.8 13.4 H9.6" stroke="#fffbe8" stroke-width="0.9"/><path d="M1.6 15.5 H11" stroke="#a79f86" stroke-width="0.8"/><path d="M10.9 12.5 Q12.3 13.8 10.9 15.3" fill="#e9e9e9" stroke="#9c9c9c" stroke-width="0.7"/></svg>
<span class="t" style="left:119.5px;top:308px;">Impedir limpeza do histórico no Firefox</span>
<svg class="i" style="left:99px;top:326px" width="16" height="16" viewBox="0 0 16 16" ><path d="M3.6 1.7 H12.4 Q14.9 1.4 14.7 3.9 L13.2 4.1 L12.4 12.4 H2.9 Z" fill="url(#gpaper)" stroke="#d2bf7e" stroke-width="0.8"/><path d="M13.25 4.1 L12.45 12.3" stroke="#a5a5a5" stroke-width="0.9"/><path d="M12.3 1.7 Q15.2 1.3 14.8 4.3 L13 4 Z" fill="#d3b862" stroke="#8f7d40" stroke-width="0.6"/><path d="M5.1 4.5H10.1M5.1 6.5H10.1M5.1 8.5H10.1M5.1 10.5H10.1" stroke="#8888b6" stroke-width="1"/><path d="M1.5 12.3 H11 Q12.4 13.8 11 15.4 H1.5 Q-0.1 13.8 1.5 12.3 Z" fill="#f9edbd" stroke="#d2bf7e" stroke-width="0.8"/><path d="M1.8 13.4 H9.6" stroke="#fffbe8" stroke-width="0.9"/><path d="M1.6 15.5 H11" stroke="#a79f86" stroke-width="0.8"/><path d="M10.9 12.5 Q12.3 13.8 10.9 15.3" fill="#e9e9e9" stroke="#9c9c9c" stroke-width="0.7"/></svg>
<span class="t" style="left:119.5px;top:326px;letter-spacing:0.005px;">Impedir limpeza do histórico no IE</span>
<div style="left:97px;top:343px;width:182px;height:18px;background:#d9d9d9;"></div>
<svg class="i" style="left:99px;top:344px" width="16" height="16" viewBox="0 0 16 16" ><path d="M3.6 1.7 H12.4 Q14.9 1.4 14.7 3.9 L13.2 4.1 L12.4 12.4 H2.9 Z" fill="url(#gpaper)" stroke="#d2bf7e" stroke-width="0.8"/><path d="M13.25 4.1 L12.45 12.3" stroke="#a5a5a5" stroke-width="0.9"/><path d="M12.3 1.7 Q15.2 1.3 14.8 4.3 L13 4 Z" fill="#d3b862" stroke="#8f7d40" stroke-width="0.6"/><path d="M5.1 4.5H10.1M5.1 6.5H10.1M5.1 8.5H10.1M5.1 10.5H10.1" stroke="#8888b6" stroke-width="1"/><path d="M1.5 12.3 H11 Q12.4 13.8 11 15.4 H1.5 Q-0.1 13.8 1.5 12.3 Z" fill="#f9edbd" stroke="#d2bf7e" stroke-width="0.8"/><path d="M1.8 13.4 H9.6" stroke="#fffbe8" stroke-width="0.9"/><path d="M1.6 15.5 H11" stroke="#a79f86" stroke-width="0.8"/><path d="M10.9 12.5 Q12.3 13.8 10.9 15.3" fill="#e9e9e9" stroke="#9c9c9c" stroke-width="0.7"/></svg>
<span class="t" style="left:119.5px;top:344px;letter-spacing:-0.144px;">Instalar impressora Formação</span>
<svg class="i" style="left:99px;top:362px" width="16" height="16" viewBox="0 0 16 16" ><path d="M3.6 1.7 H12.4 Q14.9 1.4 14.7 3.9 L13.2 4.1 L12.4 12.4 H2.9 Z" fill="url(#gpaper)" stroke="#d2bf7e" stroke-width="0.8"/><path d="M13.25 4.1 L12.45 12.3" stroke="#a5a5a5" stroke-width="0.9"/><path d="M12.3 1.7 Q15.2 1.3 14.8 4.3 L13 4 Z" fill="#d3b862" stroke="#8f7d40" stroke-width="0.6"/><path d="M5.1 4.5H10.1M5.1 6.5H10.1M5.1 8.5H10.1M5.1 10.5H10.1" stroke="#8888b6" stroke-width="1"/><path d="M1.5 12.3 H11 Q12.4 13.8 11 15.4 H1.5 Q-0.1 13.8 1.5 12.3 Z" fill="#f9edbd" stroke="#d2bf7e" stroke-width="0.8"/><path d="M1.8 13.4 H9.6" stroke="#fffbe8" stroke-width="0.9"/><path d="M1.6 15.5 H11" stroke="#a79f86" stroke-width="0.8"/><path d="M10.9 12.5 Q12.3 13.8 10.9 15.3" fill="#e9e9e9" stroke="#9c9c9c" stroke-width="0.7"/></svg>
<span class="t" style="left:119.5px;top:362px;letter-spacing:-0.086px;">Instalar o Google Chrome automaticamente</span>
<svg class="i" style="left:99px;top:380px" width="16" height="16" viewBox="0 0 16 16" ><path d="M3.6 1.7 H12.4 Q14.9 1.4 14.7 3.9 L13.2 4.1 L12.4 12.4 H2.9 Z" fill="url(#gpaper)" stroke="#d2bf7e" stroke-width="0.8"/><path d="M13.25 4.1 L12.45 12.3" stroke="#a5a5a5" stroke-width="0.9"/><path d="M12.3 1.7 Q15.2 1.3 14.8 4.3 L13 4 Z" fill="#d3b862" stroke="#8f7d40" stroke-width="0.6"/><path d="M5.1 4.5H10.1M5.1 6.5H10.1M5.1 8.5H10.1M5.1 10.5H10.1" stroke="#8888b6" stroke-width="1"/><path d="M1.5 12.3 H11 Q12.4 13.8 11 15.4 H1.5 Q-0.1 13.8 1.5 12.3 Z" fill="#f9edbd" stroke="#d2bf7e" stroke-width="0.8"/><path d="M1.8 13.4 H9.6" stroke="#fffbe8" stroke-width="0.9"/><path d="M1.6 15.5 H11" stroke="#a79f86" stroke-width="0.8"/><path d="M10.9 12.5 Q12.3 13.8 10.9 15.3" fill="#e9e9e9" stroke="#9c9c9c" stroke-width="0.7"/></svg>
<span class="t" style="left:119.5px;top:380px;letter-spacing:0.004px;">Página inicial do Chrome</span>
<svg class="i" style="left:99px;top:398px" width="16" height="16" viewBox="0 0 16 16" ><path d="M3.6 1.7 H12.4 Q14.9 1.4 14.7 3.9 L13.2 4.1 L12.4 12.4 H2.9 Z" fill="url(#gpaper)" stroke="#d2bf7e" stroke-width="0.8"/><path d="M13.25 4.1 L12.45 12.3" stroke="#a5a5a5" stroke-width="0.9"/><path d="M12.3 1.7 Q15.2 1.3 14.8 4.3 L13 4 Z" fill="#d3b862" stroke="#8f7d40" stroke-width="0.6"/><path d="M5.1 4.5H10.1M5.1 6.5H10.1M5.1 8.5H10.1M5.1 10.5H10.1" stroke="#8888b6" stroke-width="1"/><path d="M1.5 12.3 H11 Q12.4 13.8 11 15.4 H1.5 Q-0.1 13.8 1.5 12.3 Z" fill="#f9edbd" stroke="#d2bf7e" stroke-width="0.8"/><path d="M1.8 13.4 H9.6" stroke="#fffbe8" stroke-width="0.9"/><path d="M1.6 15.5 H11" stroke="#a79f86" stroke-width="0.8"/><path d="M10.9 12.5 Q12.3 13.8 10.9 15.3" fill="#e9e9e9" stroke="#9c9c9c" stroke-width="0.7"/></svg>
<span class="t" style="left:119.5px;top:398px;letter-spacing:-0.229px;">Pagina Inicial IE</span>
<svg class="i" style="left:99px;top:416px" width="16" height="16" viewBox="0 0 16 16" ><path d="M3.6 1.7 H12.4 Q14.9 1.4 14.7 3.9 L13.2 4.1 L12.4 12.4 H2.9 Z" fill="url(#gpaper)" stroke="#d2bf7e" stroke-width="0.8"/><path d="M13.25 4.1 L12.45 12.3" stroke="#a5a5a5" stroke-width="0.9"/><path d="M12.3 1.7 Q15.2 1.3 14.8 4.3 L13 4 Z" fill="#d3b862" stroke="#8f7d40" stroke-width="0.6"/><path d="M5.1 4.5H10.1M5.1 6.5H10.1M5.1 8.5H10.1M5.1 10.5H10.1" stroke="#8888b6" stroke-width="1"/><path d="M1.5 12.3 H11 Q12.4 13.8 11 15.4 H1.5 Q-0.1 13.8 1.5 12.3 Z" fill="#f9edbd" stroke="#d2bf7e" stroke-width="0.8"/><path d="M1.8 13.4 H9.6" stroke="#fffbe8" stroke-width="0.9"/><path d="M1.6 15.5 H11" stroke="#a79f86" stroke-width="0.8"/><path d="M10.9 12.5 Q12.3 13.8 10.9 15.3" fill="#e9e9e9" stroke="#9c9c9c" stroke-width="0.7"/></svg>
<span class="t" style="left:119.5px;top:416px;letter-spacing:-0.099px;">Permitir acesso ao cmd</span>
<svg class="i" style="left:99px;top:434px" width="16" height="16" viewBox="0 0 16 16" ><path d="M3.6 1.7 H12.4 Q14.9 1.4 14.7 3.9 L13.2 4.1 L12.4 12.4 H2.9 Z" fill="url(#gpaper)" stroke="#d2bf7e" stroke-width="0.8"/><path d="M13.25 4.1 L12.45 12.3" stroke="#a5a5a5" stroke-width="0.9"/><path d="M12.3 1.7 Q15.2 1.3 14.8 4.3 L13 4 Z" fill="#d3b862" stroke="#8f7d40" stroke-width="0.6"/><path d="M5.1 4.5H10.1M5.1 6.5H10.1M5.1 8.5H10.1M5.1 10.5H10.1" stroke="#8888b6" stroke-width="1"/><path d="M1.5 12.3 H11 Q12.4 13.8 11 15.4 H1.5 Q-0.1 13.8 1.5 12.3 Z" fill="#f9edbd" stroke="#d2bf7e" stroke-width="0.8"/><path d="M1.8 13.4 H9.6" stroke="#fffbe8" stroke-width="0.9"/><path d="M1.6 15.5 H11" stroke="#a79f86" stroke-width="0.8"/><path d="M10.9 12.5 Q12.3 13.8 10.9 15.3" fill="#e9e9e9" stroke="#9c9c9c" stroke-width="0.7"/></svg>
<span class="t" style="left:119.5px;top:434px;letter-spacing:-0.082px;">Redirecionar documentos para o servidor</span>
<svg class="i" style="left:99px;top:452px" width="16" height="16" viewBox="0 0 16 16" ><path d="M3.6 1.7 H12.4 Q14.9 1.4 14.7 3.9 L13.2 4.1 L12.4 12.4 H2.9 Z" fill="url(#gpaper)" stroke="#d2bf7e" stroke-width="0.8"/><path d="M13.25 4.1 L12.45 12.3" stroke="#a5a5a5" stroke-width="0.9"/><path d="M12.3 1.7 Q15.2 1.3 14.8 4.3 L13 4 Z" fill="#d3b862" stroke="#8f7d40" stroke-width="0.6"/><path d="M5.1 4.5H10.1M5.1 6.5H10.1M5.1 8.5H10.1M5.1 10.5H10.1" stroke="#8888b6" stroke-width="1"/><path d="M1.5 12.3 H11 Q12.4 13.8 11 15.4 H1.5 Q-0.1 13.8 1.5 12.3 Z" fill="#f9edbd" stroke="#d2bf7e" stroke-width="0.8"/><path d="M1.8 13.4 H9.6" stroke="#fffbe8" stroke-width="0.9"/><path d="M1.6 15.5 H11" stroke="#a79f86" stroke-width="0.8"/><path d="M10.9 12.5 Q12.3 13.8 10.9 15.3" fill="#e9e9e9" stroke="#9c9c9c" stroke-width="0.7"/></svg>
<span class="t" style="left:119.5px;top:452px;">Restringir opções Ctrl+Alt+Del</span>
<svg class="i" style="left:99px;top:470px" width="16" height="16" viewBox="0 0 16 16" ><path d="M3.6 1.7 H12.4 Q14.9 1.4 14.7 3.9 L13.2 4.1 L12.4 12.4 H2.9 Z" fill="url(#gpaper)" stroke="#d2bf7e" stroke-width="0.8"/><path d="M13.25 4.1 L12.45 12.3" stroke="#a5a5a5" stroke-width="0.9"/><path d="M12.3 1.7 Q15.2 1.3 14.8 4.3 L13 4 Z" fill="#d3b862" stroke="#8f7d40" stroke-width="0.6"/><path d="M5.1 4.5H10.1M5.1 6.5H10.1M5.1 8.5H10.1M5.1 10.5H10.1" stroke="#8888b6" stroke-width="1"/><path d="M1.5 12.3 H11 Q12.4 13.8 11 15.4 H1.5 Q-0.1 13.8 1.5 12.3 Z" fill="#f9edbd" stroke="#d2bf7e" stroke-width="0.8"/><path d="M1.8 13.4 H9.6" stroke="#fffbe8" stroke-width="0.9"/><path d="M1.6 15.5 H11" stroke="#a79f86" stroke-width="0.8"/><path d="M10.9 12.5 Q12.3 13.8 10.9 15.3" fill="#e9e9e9" stroke="#9c9c9c" stroke-width="0.7"/></svg>
<span class="t" style="left:119.5px;top:470px;letter-spacing:-0.207px;">Screensaver 3 minutos</span>
<svg class="i" style="left:99px;top:488px" width="16" height="16" viewBox="0 0 16 16" ><path d="M3.6 1.7 H12.4 Q14.9 1.4 14.7 3.9 L13.2 4.1 L12.4 12.4 H2.9 Z" fill="url(#gpaper)" stroke="#d2bf7e" stroke-width="0.8"/><path d="M13.25 4.1 L12.45 12.3" stroke="#a5a5a5" stroke-width="0.9"/><path d="M12.3 1.7 Q15.2 1.3 14.8 4.3 L13 4 Z" fill="#d3b862" stroke="#8f7d40" stroke-width="0.6"/><path d="M5.1 4.5H10.1M5.1 6.5H10.1M5.1 8.5H10.1M5.1 10.5H10.1" stroke="#8888b6" stroke-width="1"/><path d="M1.5 12.3 H11 Q12.4 13.8 11 15.4 H1.5 Q-0.1 13.8 1.5 12.3 Z" fill="#f9edbd" stroke="#d2bf7e" stroke-width="0.8"/><path d="M1.8 13.4 H9.6" stroke="#fffbe8" stroke-width="0.9"/><path d="M1.6 15.5 H11" stroke="#a79f86" stroke-width="0.8"/><path d="M10.9 12.5 Q12.3 13.8 10.9 15.3" fill="#e9e9e9" stroke="#9c9c9c" stroke-width="0.7"/></svg>
<span class="t" style="left:119.5px;top:488px;letter-spacing:-0.079px;">Wallpaper Formacao</span>
<svg class="i" style="left:99px;top:506px" width="16" height="16" viewBox="0 0 16 16" ><path d="M3.6 1.7 H12.4 Q14.9 1.4 14.7 3.9 L13.2 4.1 L12.4 12.4 H2.9 Z" fill="url(#gpaper)" stroke="#d2bf7e" stroke-width="0.8"/><path d="M13.25 4.1 L12.45 12.3" stroke="#a5a5a5" stroke-width="0.9"/><path d="M12.3 1.7 Q15.2 1.3 14.8 4.3 L13 4 Z" fill="#d3b862" stroke="#8f7d40" stroke-width="0.6"/><path d="M5.1 4.5H10.1M5.1 6.5H10.1M5.1 8.5H10.1M5.1 10.5H10.1" stroke="#8888b6" stroke-width="1"/><path d="M1.5 12.3 H11 Q12.4 13.8 11 15.4 H1.5 Q-0.1 13.8 1.5 12.3 Z" fill="#f9edbd" stroke="#d2bf7e" stroke-width="0.8"/><path d="M1.8 13.4 H9.6" stroke="#fffbe8" stroke-width="0.9"/><path d="M1.6 15.5 H11" stroke="#a79f86" stroke-width="0.8"/><path d="M10.9 12.5 Q12.3 13.8 10.9 15.3" fill="#e9e9e9" stroke="#9c9c9c" stroke-width="0.7"/></svg>
<span class="t" style="left:119.5px;top:506px;letter-spacing:-0.153px;">Wallpaper IT</span>
<svg class="i" style="left:99px;top:524px" width="16" height="16" viewBox="0 0 16 16" ><path d="M3.6 1.7 H12.4 Q14.9 1.4 14.7 3.9 L13.2 4.1 L12.4 12.4 H2.9 Z" fill="url(#gpaper)" stroke="#d2bf7e" stroke-width="0.8"/><path d="M13.25 4.1 L12.45 12.3" stroke="#a5a5a5" stroke-width="0.9"/><path d="M12.3 1.7 Q15.2 1.3 14.8 4.3 L13 4 Z" fill="#d3b862" stroke="#8f7d40" stroke-width="0.6"/><path d="M5.1 4.5H10.1M5.1 6.5H10.1M5.1 8.5H10.1M5.1 10.5H10.1" stroke="#8888b6" stroke-width="1"/><path d="M1.5 12.3 H11 Q12.4 13.8 11 15.4 H1.5 Q-0.1 13.8 1.5 12.3 Z" fill="#f9edbd" stroke="#d2bf7e" stroke-width="0.8"/><path d="M1.8 13.4 H9.6" stroke="#fffbe8" stroke-width="0.9"/><path d="M1.6 15.5 H11" stroke="#a79f86" stroke-width="0.8"/><path d="M10.9 12.5 Q12.3 13.8 10.9 15.3" fill="#e9e9e9" stroke="#9c9c9c" stroke-width="0.7"/></svg>
<span class="t" style="left:119.5px;top:524px;letter-spacing:-0.141px;">Wallpaper RH</span>
<svg class="i" style="left:66px;top:547px" width="6" height="10" viewBox="0 0 6 10" ><path d="M0.8 0.6 L4.9 4.7 L0.8 8.8" fill="none" stroke="#a0a0a0" stroke-width="1.7"/></svg>
<svg class="i" style="left:79px;top:542px" width="16" height="16" viewBox="0 0 16 16" ><path d="M1.5 2.5 H7.2 L8.2 1.5 H14 Q14.5 1.5 14.5 2.3 V13.5 H1.5 Z" fill="#efd488" stroke="#d6b45c" stroke-width="1"/><path d="M2 4.3 H14 V13 H2 Z" fill="url(#gfold)"/><path d="M9.6 4.6 H14 V13 H9.6 Z" fill="#f3d88c" opacity="0.55"/><path d="M2 4.4 H7.6 L8.4 3.9 H14" fill="none" stroke="#fff6cf" stroke-width="0.7"/><path d="M1.2 13.6 H14.8" stroke="#c39f45" stroke-width="1"/><rect x="8.8" y="2.1" width="3.2" height="1.4" rx="0.5" fill="#fff"/><rect x="11" y="2.1" width="2.2" height="1.4" rx="0.6" fill="#3d8ee6"/><g transform="translate(1,0)"><rect x="6.3" y="5.2" width="8.6" height="3.6" rx="0.8" fill="#f4f6f9" stroke="#9aa3ad" stroke-width="0.8"/><rect x="9" y="6.4" width="3.4" height="1" fill="#6b7886"/><path d="M7 9 H14.4 L11.6 12.4 V15.2 H9.8 V12.4 Z" fill="#8d9aa8" stroke="#5f6b78" stroke-width="0.7"/></g></svg>
<span class="t" style="left:100.8px;top:542px;letter-spacing:-0.136px;">WMI Filters</span>
<svg class="i" style="left:66px;top:565px" width="6" height="10" viewBox="0 0 6 10" ><path d="M0.8 0.6 L4.9 4.7 L0.8 8.8" fill="none" stroke="#a0a0a0" stroke-width="1.7"/></svg>
<svg class="i" style="left:79px;top:560px" width="16" height="16" viewBox="0 0 16 16" ><path d="M1.5 2.5 H7.2 L8.2 1.5 H14 Q14.5 1.5 14.5 2.3 V13.5 H1.5 Z" fill="#efd488" stroke="#d6b45c" stroke-width="1"/><path d="M2 4.3 H14 V13 H2 Z" fill="url(#gfold)"/><path d="M9.6 4.6 H14 V13 H9.6 Z" fill="#f3d88c" opacity="0.55"/><path d="M2 4.4 H7.6 L8.4 3.9 H14" fill="none" stroke="#fff6cf" stroke-width="0.7"/><path d="M1.2 13.6 H14.8" stroke="#c39f45" stroke-width="1"/><rect x="8.8" y="2.1" width="3.2" height="1.4" rx="0.5" fill="#fff"/><rect x="11" y="2.1" width="2.2" height="1.4" rx="0.6" fill="#3d8ee6"/><g transform="translate(1,0)"><rect x="4.8" y="3.2" width="9.6" height="12.2" fill="#dfe6f2" stroke="#6d7c93" stroke-width="1"/><rect x="5.4" y="3.2" width="8.4" height="1.6" fill="#b5673c"/><rect x="7.2" y="6.6" width="5.4" height="7" fill="#f7f9fc" stroke="#43608f" stroke-width="0.9"/><path d="M8.4 8.4H11.4M8.4 10H11.4M8.4 11.6H11.4" stroke="#4f74b5" stroke-width="0.8"/></g></svg>
<span class="t" style="left:100.8px;top:560px;letter-spacing:-0.512px;">Starter GPOs</span>
<svg class="i" style="left:28px;top:583px" width="6" height="10" viewBox="0 0 6 10" ><path d="M0.8 0.6 L4.9 4.7 L0.8 8.8" fill="none" stroke="#a0a0a0" stroke-width="1.7"/></svg>
<svg class="i" style="left:41px;top:578px" width="16" height="16" viewBox="0 0 16 16" ><path d="M1.5 2.5 H7.2 L8.2 1.5 H14 Q14.5 1.5 14.5 2.3 V13.5 H1.5 Z" fill="#efd488" stroke="#d6b45c" stroke-width="1"/><path d="M2 4.3 H14 V13 H2 Z" fill="url(#gfold)"/><path d="M9.6 4.6 H14 V13 H9.6 Z" fill="#f3d88c" opacity="0.55"/><path d="M2 4.4 H7.6 L8.4 3.9 H14" fill="none" stroke="#fff6cf" stroke-width="0.7"/><path d="M1.2 13.6 H14.8" stroke="#c39f45" stroke-width="1"/><rect x="8.6" y="1.6" width="5" height="2" rx="0.6" fill="#fff" stroke="#c9c9c9" stroke-width="0.5"/><rect x="10.6" y="2" width="2.2" height="1.1" fill="#3c8fe8"/><g transform="translate(1,0)"><rect x="7" y="5" width="9" height="11" fill="#1f6fd0"/><rect x="8" y="6.2" width="3" height="2.6" fill="#bfe0ff"/><rect x="12" y="6.2" width="3" height="2.6" fill="#8cc5ff"/><rect x="8" y="9.8" width="3" height="2.6" fill="#8cc5ff"/><rect x="12" y="9.8" width="3" height="2.6" fill="#bfe0ff"/><rect x="10" y="13.4" width="3.4" height="2.6" fill="#0b3f8e"/></g></svg>
<span class="t" style="left:63.2px;top:578px;letter-spacing:-0.522px;">Sites</span>
<svg class="i" style="left:42px;top:596px" width="16" height="16" viewBox="0 0 16 16" ><path d="M1.5 2.5 H5.4 L6.4 1.2 H11 V9 H1.5 Z" fill="#f0dc98" stroke="#d3b45e" stroke-width="0.9"/><rect x="4.6" y="3.6" width="8.6" height="7.4" fill="#2440c4" stroke="#5a6478" stroke-width="0.9"/><rect x="6" y="4.8" width="4" height="4" fill="#dfe8ff"/><rect x="10.4" y="1.2" width="4.8" height="4.2" fill="#eef2fb" stroke="#6f7f9e" stroke-width="0.7"/><path d="M11.2 2.6 L12.4 4 L14.4 1.8" fill="none" stroke="#2a50c8" stroke-width="0.9"/><rect x="7.6" y="11" width="2.6" height="2.4" fill="#8a8f99"/><rect x="5.4" y="13.4" width="7" height="1.4" fill="#7d828c"/><rect x="0.6" y="8.6" width="2.6" height="6.4" rx="0.6" fill="#b9bec6" stroke="#6e737c" stroke-width="0.7"/><rect x="1.2" y="13" width="1.4" height="1" fill="#44c13c"/></svg>
<span class="t" style="left:63.2px;top:596px;letter-spacing:0.088px;">Group Policy Modeling</span>
<svg class="i" style="left:41px;top:614px" width="16" height="16" viewBox="0 0 16 16" ><path d="M1.5 2.5 H7.2 L8.2 1.5 H14 Q14.5 1.5 14.5 2.3 V13.5 H1.5 Z" fill="#efd488" stroke="#d6b45c" stroke-width="1"/><path d="M2 4.3 H14 V13 H2 Z" fill="url(#gfold)"/><path d="M9.6 4.6 H14 V13 H9.6 Z" fill="#f3d88c" opacity="0.55"/><path d="M2 4.4 H7.6 L8.4 3.9 H14" fill="none" stroke="#fff6cf" stroke-width="0.7"/><path d="M1.2 13.6 H14.8" stroke="#c39f45" stroke-width="1"/><rect x="8.8" y="2.1" width="3.2" height="1.4" rx="0.5" fill="#fff"/><rect x="11" y="2.1" width="2.2" height="1.4" rx="0.6" fill="#3d8ee6"/><g transform="translate(1,0)"><rect x="8.2" y="6.4" width="7" height="9" fill="#fdfdfd" stroke="#8893a3" stroke-width="0.9"/><path d="M9.6 9.2 L10.8 10.6 L13 8" fill="none" stroke="#2f66c8" stroke-width="1"/><path d="M9.6 12.2H13.6M9.6 13.8H13.6" stroke="#5f88cf" stroke-width="0.8"/></g></svg>
<span class="t" style="left:63.2px;top:614px;letter-spacing:-0.181px;">Group Policy Results</span>
</div>
</div>
<div id="right">
<div style="left:343px;top:75px;width:937px;height:662px;background:#f0f0f0;"></div>
<div style="left:343px;top:75px;width:937px;height:1px;background:#a0a0a0;"></div>
<div style="left:343px;top:76px;width:936px;height:1px;background:#696969;"></div>
<div style="left:343px;top:75px;width:1px;height:662px;background:#a0a0a0;"></div>
<div style="left:344px;top:76px;width:1px;height:660px;background:#696969;"></div>
<div style="left:1279px;top:75px;width:1px;height:662px;background:#fff;"></div>
<div style="left:343px;top:736px;width:937px;height:1px;background:#fff;"></div>
<div style="left:1278px;top:77px;width:1px;height:659px;background:#e3e3e3;"></div>
<div style="left:345px;top:735px;width:934px;height:1px;background:#e3e3e3;"></div>
<span class="t" style="left:347.6px;top:80px;font-size:14px;font-weight:700;letter-spacing:0.289px;">Instalar impressora Formação</span>
<div style="left:348px;top:119px;width:925px;height:612px;background:#fff;border:1px solid #dcdcdc;"></div>
<div style="left:394px;top:101px;width:43px;height:19px;background:#f0f0f0;border:1px solid #dcdcdc;"></div>
<span class="t" style="left:398.7px;top:103px;transform:scaleX(0.8750);">Details</span>
<div style="left:436px;top:101px;width:51px;height:19px;background:#f0f0f0;border:1px solid #dcdcdc;"></div>
<span class="t" style="left:442.8px;top:103px;transform:scaleX(0.8695);">Settings</span>
<div style="left:486px;top:101px;width:64px;height:19px;background:#f0f0f0;border:1px solid #dcdcdc;"></div>
<span class="t" style="left:492.59px;top:103px;transform:scaleX(0.8871);">Delegation</span>
<div style="left:549px;top:101px;width:41px;height:19px;background:#f0f0f0;border:1px solid #dcdcdc;"></div>
<span class="t" style="left:555.54px;top:103px;transform:scaleX(0.8874);">Status</span>
<div style="left:348px;top:99px;width:47px;height:21px;background:#fff;border:1px solid #dcdcdc;border-bottom:none;"></div>
<span class="t" style="left:355.47px;top:101px;transform:scaleX(0.9168);">Scope</span>
<span class="t" style="left:356.82px;top:125px;transform:scaleX(0.9763);font-weight:700;">Links</span>
<span class="t" style="left:356.9px;top:145px;transform:scaleX(0.8768);">Display links in this location:</span>
<div style="left:539px;top:146px;width:727px;height:21px;background:#e1e1e1;border:1px solid #adadad;"></div>
<span class="t" style="left:542.15px;top:149px;transform:scaleX(0.8830);">rotolip.local</span>
<svg class="i" style="left:1253px;top:154px" width="9" height="6" viewBox="0 0 9 6" ><path d="M0.5 0.7 L4.5 4.7 L8.5 0.7" fill="none" stroke="#404040" stroke-width="1.1"/></svg>
<span class="t" style="left:356.9px;top:171px;transform:scaleX(0.8783);">The following sites, domains, and OUs are linked to this GPO:</span>
<div style="left:357px;top:193px;width:909px;height:185px;background:#fff;border:1px solid #828790;"></div>
<div style="left:608px;top:194px;width:1px;height:25px;background:#e5e5e5;"></div>
<div style="left:677px;top:194px;width:1px;height:25px;background:#e5e5e5;"></div>
<div style="left:773px;top:194px;width:1px;height:25px;background:#e5e5e5;"></div>
<div style="left:1023px;top:194px;width:1px;height:25px;background:#e5e5e5;"></div>
<svg class="i" style="left:480px;top:195px" width="9" height="5" viewBox="0 0 9 5" ><path d="M0.5 4.6 L4.5 0.7 L8.5 4.6" fill="none" stroke="#606060" stroke-width="0.9"/></svg>
<span class="t" style="left:364.88px;top:199px;transform:scaleX(0.8948);">Location</span>
<span class="t" style="left:614.89px;top:199px;transform:scaleX(0.8848);">Enforced</span>
<span class="t" style="left:683.89px;top:199px;transform:scaleX(0.8877);">Link Enabled</span>
<span class="t" style="left:780.31px;top:199px;transform:scaleX(0.8668);">Path</span>
<div style="left:379px;top:219px;width:645px;height:17px;background:#0078d7;"></div>
<svg class="i" style="left:363px;top:219px" width="16" height="16" viewBox="0 0 16 16" ><path d="M1.5 2.5 H7.2 L8.2 1.5 H14 Q14.5 1.5 14.5 2.3 V13.5 H1.5 Z" fill="#8eb0b8" stroke="#7399a3" stroke-width="1"/><path d="M2 4.3 H14 V13 H2 Z" fill="url(#gfold2)"/><path d="M9.6 4.6 H14 V13 H9.6 Z" fill="#7e9fa3" opacity="0.5"/><path d="M1.2 13.6 H14.8" stroke="#5f8791" stroke-width="1"/><rect x="8.8" y="2.1" width="3.2" height="1.4" rx="0.5" fill="#b9d3ea"/><rect x="11" y="2.1" width="2.2" height="1.4" rx="0.6" fill="#2a7fdc"/><rect x="3.9" y="6" width="5" height="6" fill="url(#gou2)"/><rect x="4.9" y="7.8" width="2.6" height="2.4" fill="#9fc0ad" opacity="0.85"/></svg>
<span class="t" style="left:380.82px;top:220px;transform:scaleX(0.8551);color:#fff;">Formacao</span>
<span class="t" style="left:614.89px;top:220px;transform:scaleX(0.8929);color:#fff;">No</span>
<span class="t" style="left:683.87px;top:220px;transform:scaleX(0.9143);color:#fff;">Yes</span>
<span class="t" style="left:779.44px;top:220px;transform:scaleX(0.8954);color:#fff;">rotolip.local/Este/Formacao</span>
<div style="left:379px;top:236px;width:645px;height:17px;background:#0078d7;"></div>
<svg class="i" style="left:363px;top:236px" width="16" height="16" viewBox="0 0 16 16" ><path d="M1.5 2.5 H7.2 L8.2 1.5 H14 Q14.5 1.5 14.5 2.3 V13.5 H1.5 Z" fill="#8eb0b8" stroke="#7399a3" stroke-width="1"/><path d="M2 4.3 H14 V13 H2 Z" fill="url(#gfold2)"/><path d="M9.6 4.6 H14 V13 H9.6 Z" fill="#7e9fa3" opacity="0.5"/><path d="M1.2 13.6 H14.8" stroke="#5f8791" stroke-width="1"/><rect x="8.8" y="2.1" width="3.2" height="1.4" rx="0.5" fill="#b9d3ea"/><rect x="11" y="2.1" width="2.2" height="1.4" rx="0.6" fill="#2a7fdc"/><rect x="3.9" y="6" width="5" height="6" fill="url(#gou2)"/><rect x="4.9" y="7.8" width="2.6" height="2.4" fill="#9fc0ad" opacity="0.85"/></svg>
<span class="t" style="left:380.82px;top:237px;transform:scaleX(0.8551);color:#fff;">Formacao</span>
<span class="t" style="left:614.89px;top:237px;transform:scaleX(0.8929);color:#fff;">No</span>
<span class="t" style="left:683.87px;top:237px;transform:scaleX(0.9143);color:#fff;">Yes</span>
<span class="t" style="left:779.44px;top:237px;transform:scaleX(0.8938);color:#fff;">rotolip.local/Sul/Formacao</span>
<div style="left:379px;top:253px;width:645px;height:17px;background:#0078d7;"></div>
<svg class="i" style="left:363px;top:253px" width="16" height="16" viewBox="0 0 16 16" ><path d="M1.5 2.5 H7.2 L8.2 1.5 H14 Q14.5 1.5 14.5 2.3 V13.5 H1.5 Z" fill="#8eb0b8" stroke="#7399a3" stroke-width="1"/><path d="M2 4.3 H14 V13 H2 Z" fill="url(#gfold2)"/><path d="M9.6 4.6 H14 V13 H9.6 Z" fill="#7e9fa3" opacity="0.5"/><path d="M1.2 13.6 H14.8" stroke="#5f8791" stroke-width="1"/><rect x="8.8" y="2.1" width="3.2" height="1.4" rx="0.5" fill="#b9d3ea"/><rect x="11" y="2.1" width="2.2" height="1.4" rx="0.6" fill="#2a7fdc"/><rect x="3.9" y="6" width="5" height="6" fill="url(#gou2)"/><rect x="4.9" y="7.8" width="2.6" height="2.4" fill="#9fc0ad" opacity="0.85"/></svg>
<span class="t" style="left:380.82px;top:254px;transform:scaleX(0.8551);color:#fff;">Formacao</span>
<span class="t" style="left:614.89px;top:254px;transform:scaleX(0.8929);color:#fff;">No</span>
<span class="t" style="left:683.87px;top:254px;transform:scaleX(0.9143);color:#fff;">Yes</span>
<span class="t" style="left:779.44px;top:254px;transform:scaleX(0.8969);color:#fff;">rotolip.local/Norte/Formacao</span>
<div style="left:352px;top:383px;width:919px;height:6px;background:#f0f0f0;"></div>
<div style="left:352px;top:383px;width:919px;height:1px;background:#e3e3e3;"></div>
<div style="left:352px;top:383px;width:1px;height:6px;background:#e3e3e3;"></div>
<div style="left:353px;top:384px;width:917px;height:2px;background:#fff;"></div>
<div style="left:352px;top:387px;width:919px;height:1px;background:#a0a0a0;"></div>
<div style="left:352px;top:388px;width:919px;height:1px;background:#696969;"></div>
<div style="left:1270px;top:383px;width:1px;height:6px;background:#696969;"></div>
<span class="t" style="left:356.82px;top:393px;transform:scaleX(0.9752);font-weight:700;">Security Filtering</span>
<span class="t" style="left:356.9px;top:413px;transform:scaleX(0.8799);">The settings in this GPO can only apply to the following groups, users, and computers:</span>
<div style="left:357px;top:432px;width:909px;height:186px;background:#fff;border:1px solid #828790;"></div>
<div style="left:774px;top:433px;width:1px;height:25px;background:#e5e5e5;"></div>
<svg class="i" style="left:564px;top:435px" width="9" height="5" viewBox="0 0 9 5" ><path d="M0.5 4.6 L4.5 0.7 L8.5 4.6" fill="none" stroke="#606060" stroke-width="0.9"/></svg>
<span class="t" style="left:364.91px;top:438px;transform:scaleX(0.8621);">Name</span>
<div style="left:379px;top:458px;width:396px;height:17px;background:#f0f0f0;"></div>
<svg class="i" style="left:364px;top:459px" width="16" height="16" viewBox="0 0 16 16" ><circle cx="4.6" cy="4" r="2.9" fill="#b9b08f"/><path d="M1.7 4.4 Q1.5 0.8 4.6 0.9 Q7.8 0.9 7.5 4.6 Q6.2 2.6 4.4 3 Q2.6 3 1.7 4.4 Z" fill="#566f52"/><path d="M0.4 12.4 Q0.4 7 4.6 7 Q8.8 7 8.8 12.4 Z" fill="#4c9a63" stroke="#357a4a" stroke-width="0.6"/><path d="M3.4 7.2 L4.6 9.4 L5.8 7.2" fill="#d8eadb"/><circle cx="9.9" cy="5.6" r="3" fill="#b59a7c"/><path d="M6.9 6 Q6.6 2.3 9.9 2.4 Q13.2 2.4 12.9 6.2 Q11.6 4.2 9.7 4.6 Q7.8 4.6 6.9 6 Z" fill="#2c5566"/><path d="M5.2 15.2 Q5.2 9 9.9 9 Q15 9 15 15.2 Z" fill="#4a90da" stroke="#2f6cb0" stroke-width="0.6"/><path d="M8.6 9.3 L9.9 11.8 L11.2 9.3" fill="#dbe8f6"/><path d="M6.4 14.6 H13.8" stroke="#7db6ec" stroke-width="0.9"/></svg>
<span class="t" style="left:381.22px;top:459px;transform:scaleX(0.8902);">Authenticated Users</span>
<div style="left:358px;top:624px;width:109px;height:21px;background:#e1e1e1;border:1px solid #adadad;"></div>
<span class="t" style="left:398.27px;top:627px;transform:scaleX(0.9088);">Add...</span>
<div style="left:474px;top:624px;width:109px;height:21px;background:#e1e1e1;border:1px solid #adadad;"></div>
<span class="t" style="left:508.09px;top:627px;transform:scaleX(0.8817);">Remove</span>
<div style="left:590px;top:624px;width:109px;height:21px;background:#cccccc;border:1px solid #bfbfbf;"></div>
<span class="t" style="left:621.3px;top:627px;transform:scaleX(0.8738);color:#838383;">Properties</span>
<div style="left:352px;top:651px;width:919px;height:6px;background:#f0f0f0;"></div>
<div style="left:352px;top:651px;width:919px;height:1px;background:#e3e3e3;"></div>
<div style="left:352px;top:651px;width:1px;height:6px;background:#e3e3e3;"></div>
<div style="left:353px;top:652px;width:917px;height:2px;background:#fff;"></div>
<div style="left:352px;top:655px;width:919px;height:1px;background:#a0a0a0;"></div>
<div style="left:352px;top:656px;width:919px;height:1px;background:#696969;"></div>
<div style="left:1270px;top:651px;width:1px;height:6px;background:#696969;"></div>
<span class="t" style="left:357.4px;top:661px;transform:scaleX(1.0010);font-weight:700;">WMI Filtering</span>
<span class="t" style="left:360.6px;top:680px;transform:scaleX(0.8797);">This GPO is linked to the following WMI filter:</span>
<div style="left:360px;top:699px;width:299px;height:21px;background:#e1e1e1;border:1px solid #adadad;"></div>
<span class="t" style="left:363.89px;top:702px;transform:scaleX(0.8890);">&lt;none&gt;</span>
<svg class="i" style="left:645px;top:708px" width="9" height="6" viewBox="0 0 9 6" ><path d="M0.5 0.7 L4.5 4.7 L8.5 0.7" fill="none" stroke="#404040" stroke-width="1.1"/></svg>
<div style="left:676px;top:699px;width:74px;height:21px;background:#cccccc;border:1px solid #bfbfbf;"></div>
<span class="t" style="left:698.46px;top:702px;transform:scaleX(0.9196);color:#838383;">Open</span>
</div>
<div id="status">
<div style="left:0px;top:737px;width:1280px;height:22px;background:#f0f0f0;"></div>
<div style="left:0px;top:737px;width:1280px;height:1px;background:#e6e6e6;"></div>
<div style="left:1277px;top:739px;width:1px;height:20px;background:#d7d7d7;"></div>
<div style="left:1059px;top:739px;width:1px;height:20px;background:#d7d7d7;"></div>
<div style="left:1192px;top:739px;width:1px;height:20px;background:#d7d7d7;"></div>
<div style="left:0px;top:759px;width:1280px;height:1px;background:#fff;"></div>
</div>
<div id="taskbar">
<div style="left:0px;top:760px;width:1280px;height:40px;background:#252525;"></div>
<div style="left:0px;top:760px;width:355px;height:40px;background:#011823;"></div>
<div style="left:1157px;top:760px;width:123px;height:40px;background:#010818;"></div>
<div style="left:471px;top:760px;width:160px;height:40px;background:#505050;"></div>
<div style="left:495px;top:761px;width:15px;height:37px;background:#4b4b4b;"></div>
<div style="left:104px;top:798px;width:152px;height:2px;background:#76b9ed;"></div>
<div style="left:265px;top:798px;width:152px;height:2px;background:#76b9ed;"></div>
<div style="left:471px;top:798px;width:160px;height:2px;background:#76b9ed;"></div>
<div style="left:636px;top:798px;width:152px;height:2px;background:#76b9ed;"></div>
<svg class="i" style="left:16px;top:772px" width="16" height="16" viewBox="0 0 16 16" ><path d="M0 2.3 L6.6 1.4 V7.6 H0 Z M7.5 1.25 L16 0 V7.6 H7.5 Z M0 8.5 H6.6 V14.7 L0 13.8 Z M7.5 8.5 H16 V16 L7.5 14.8 Z" fill="#fff"/></svg>
<svg class="i" style="left:63px;top:768px" width="24" height="24" viewBox="0 0 24 24" ><defs><linearGradient id="ed1" x1="0" y1="0" x2="1" y2="0"><stop offset="0" stop-color="#2aa7e6"/><stop offset="0.55" stop-color="#3fc6b0"/><stop offset="1" stop-color="#6fd84e"/></linearGradient><linearGradient id="ed2" x1="0" y1="0" x2="0" y2="1"><stop offset="0" stop-color="#1c7fd8"/><stop offset="1" stop-color="#0f4fa0"/></linearGradient></defs><circle cx="12" cy="12" r="11.6" fill="url(#ed2)"/><path d="M0.6 11 Q1.6 0.4 12.4 0.4 Q22.6 0.8 23.6 10.4 Q23.8 15.6 17.6 15.4 Q14 15.2 14.6 12.6 Q15.4 10.8 14 9.2 Q11.4 6.6 6.6 8.6 Q2 10.8 0.6 11 Z" fill="url(#ed1)"/><path d="M9 9.4 Q6.4 13 8.6 17.4 Q11 21.6 16.2 21.6 Q20 21.2 22.4 17.6 Q18.6 19.6 14.8 17.4 Q11.4 15 12.6 11.4 Q11.4 9.2 9 9.4 Z" fill="#0d3f86"/><path d="M13.4 12.4 Q13 14.4 15 15.2 Q17 15.8 19.4 15.2 Q15.6 14.8 14.9 12.4 Z" fill="#011823"/></svg>
<svg class="i" style="left:110.5px;top:769px" width="23" height="22" viewBox="0 0 23 22" ><path d="M7 0.6 L21.4 4.4 V15.8 L7 12.6 Z" fill="#2f9be9" stroke="#cfe6f8" stroke-width="1"/><path d="M8.2 2.2 L20.4 5.4 V14.4 L8.2 11.6 Z" fill="#4fb3f4"/><path d="M12.4 14 L15.6 14.8 L15.2 17 L11.4 16.2 Z" fill="#9fb6c8"/><path d="M10.4 16.4 L17.4 18 L16 19.4 L9 17.6 Z" fill="#c9d3db"/><path d="M0.6 16.8 L6.4 14.2 L17.4 19 L11.4 21.6 Z" fill="#e2e6ea" stroke="#aeb6bd" stroke-width="0.5"/><path d="M2.6 16.9 L6.4 15.2 L15 19 L11.2 20.6 Z" fill="#b7bfc6"/></svg>
<span class="t" style="left:138.4px;top:772px;color:#fff;letter-spacing:0.328px;">phr</span>
<svg class="i" style="left:271px;top:768px" width="24" height="24" viewBox="0 0 24 24" ><rect x="1" y="0.8" width="10.4" height="20.6" rx="0.8" fill="#2f9be9" stroke="#d7ebfa" stroke-width="1"/><rect x="1.6" y="1.4" width="9.2" height="4.6" fill="#56b5f5"/><path d="M1.6 6.4 H10.8" stroke="#d7ebfa" stroke-width="0.8"/><path d="M10.6 13.4 Q10.6 10.6 13.4 10.6 H17 Q19.8 10.6 19.8 13.4" fill="none" stroke="#e4e9ee" stroke-width="1.3"/><rect x="5.2" y="13" width="18.2" height="10.2" rx="1.2" fill="#6f879b" stroke="#f0f3f6" stroke-width="1.1"/><path d="M5.8 17 H22.8" stroke="#e4e9ee" stroke-width="0.9"/><rect x="13.2" y="15.8" width="2.4" height="2.6" fill="#e4e9ee"/></svg>
<span class="t" style="left:298.5px;top:772px;color:#fff;letter-spacing:-0.273px;">Server Manager</span>
<div class="clip" style="left:0;top:760px;width:1280px;height:40px">
<span class="t" style="left:407.6px;top:-7px;color:#150f13;letter-spacing:-0.097px;">wallpapers</span>
<span class="t" style="left:400.0px;top:25px;color:#130d11;letter-spacing:-0.715px;">This PC</span>
<div style="left:390px;top:0px;width:10px;height:5px;background:#3b3315;"></div>
<div style="left:394.5px;top:5px;width:1.2px;height:3px;background:#163a16;"></div>
<div style="left:391px;top:7.4px;width:8.4px;height:1.2px;background:#163a16;"></div>
<div style="left:379px;top:26px;width:16px;height:11px;background:#0f222b;border:1px solid #15303b;"></div>
<div style="left:383px;top:37px;width:8px;height:1px;background:#1a1a1a;"></div>
</div>
<svg class="i" style="left:434px;top:768px" width="23" height="23" viewBox="0 0 23 23" ><path d="M8 2.4 L22 0.4 L20.4 12 L7.4 13.6 Z" fill="#c9d2da" stroke="#e8edf1" stroke-width="0.8"/><path d="M9.4 3.6 L20.6 2 L19.4 10.8 L8.9 12.2 Z" fill="#1534d8"/><path d="M9.4 3.6 L15 2.8 L10.6 11.9 L8.9 12.2 Z" fill="#3a5cf0"/><path d="M4.2 9.4 Q4.4 6.8 7 6.8 H9" fill="none" stroke="#dfe4e8" stroke-width="1.2"/><path d="M0.8 11.6 L6.4 9.2 L18.6 11.2 L18.6 20.6 L12.2 23 L0.8 20.4 Z" fill="#a9bbc7" stroke="#e3e9ed" stroke-width="0.7"/><path d="M0.8 11.6 L12.2 14 L18.6 11.2" fill="none" stroke="#dfe4e8" stroke-width="0.8"/><path d="M12.2 14 V23" stroke="#b9c3cb" stroke-width="0.7"/><rect x="5" y="14.6" width="2.6" height="2.8" fill="#e8edf1" transform="skewY(12) translate(0,-1.3)"/></svg>
<svg class="i" style="left:482px;top:768px" width="23" height="24" viewBox="0 0 23 24" ><path d="M4.2 1.2 H19.4 Q22.4 1 22 3.8 L20.2 4 L18.6 19.6 H4.2 Z" fill="#fcf8e4" stroke="#e6d8a4" stroke-width="0.9"/><path d="M19.4 1.2 Q22.6 1 22 4 L19.8 3.8 Z" fill="#e6cb70"/><path d="M4.7 1.6 V19" stroke="#f3e6ae" stroke-width="1.8"/><path d="M7.4 4.8H16.6M7.4 9.8H16.6M7.4 12H12" stroke="#bdb8d3" stroke-width="1"/><path d="M7.4 7.2H16.6" stroke="#dcdad2" stroke-width="1"/><path d="M1.6 19.4 H12 V23.2 H1.6 Q-0.4 21.4 1.6 19.4 Z" fill="#f8eab4" stroke="#dcc77c" stroke-width="0.9"/><path d="M11 14.6 Q11 12.6 13.2 12.6 H15.4 Q17.6 12.6 17.8 14.6" fill="none" stroke="#4a545e" stroke-width="1.3"/><path d="M7.2 15.6 L13 14 L23 15.4 V21 L17 24 L7.2 21.8 Z" fill="#9fb1be" stroke="#7e909d" stroke-width="0.6"/><path d="M7.2 15.6 L13 14 L23 15.4 L17 17.6 Z" fill="#c3d0d9"/><path d="M17 17.6 L23 15.4 V21 L17 24 Z" fill="#8a9dab"/><path d="M7.2 18.4 L17 20.4 L23 18" fill="none" stroke="#c9d5dd" stroke-width="0.7"/><rect x="9.6" y="17.4" width="2" height="2.6" fill="#39434d"/><rect x="13.2" y="18.2" width="1.6" height="2.4" fill="#e9eef2"/></svg>
<span class="t" style="left:508.8px;top:772px;color:#fff;letter-spacing:-0.087px;">Group Policy Mana...</span>
<svg class="i" style="left:642px;top:768px" width="24" height="24" viewBox="0 0 24 24" ><path d="M1 3.4 Q0.4 0.8 3.4 0.4 L3.6 2.8 L6 3 L6.4 0.6 Q8.8 1.6 8 4.4 Q7 6.2 5.6 6.6 V9 H3.2 V6.6 Q1.4 5.8 1 3.4 Z" fill="#dfe3e6" stroke="#9aa3ab" stroke-width="0.5"/><rect x="2.9" y="8.6" width="3" height="14.6" rx="0.8" fill="#f0b52a" stroke="#b98312" stroke-width="0.5"/><path d="M11.4 6.4 L20.6 3.6 L23 8.8 L13.4 12 Z" fill="#fbfbfb" stroke="#c3c8cc" stroke-width="0.6"/><path d="M6.6 12.4 L12.6 9.2 L23.4 9 L23.4 14.6 L14.4 19 L6.6 17.6 Z" fill="#d9dde1" stroke="#8f979e" stroke-width="0.6"/><path d="M6.6 12.4 L14.4 13.6 L23.4 9" fill="none" stroke="#f4f6f7" stroke-width="0.8"/><path d="M7.4 14.4 L14 15.6 L22.8 11.4 V13 L14 17.4 L7.4 16.2 Z" fill="#3b4046"/><path d="M8.6 17.2 L14.4 18.2 L19 16 L21.4 17.4 L15 20.8 L7 19.2 Z" fill="#f7f8f9" stroke="#b8bec3" stroke-width="0.5"/><path d="M9 18.6 L12.4 19.2" stroke="#2f8de0" stroke-width="1.6"/></svg>
<span class="t" style="left:669.8px;top:772px;color:#fff;letter-spacing:0.103px;">Print Management</span>
<svg class="i" style="left:1096.5px;top:776px" width="13" height="8" viewBox="0 0 13 8" ><path d="M0.6 7 L6.5 1 L12.4 7" fill="none" stroke="#fff" stroke-width="1.2"/></svg>
<svg class="i" style="left:1119px;top:772px" width="17" height="17" viewBox="0 0 17 17" ><circle cx="7.6" cy="7.6" r="7" fill="none" stroke="#fff" stroke-width="1.1"/><ellipse cx="7.6" cy="7.6" rx="3.1" ry="7" fill="none" stroke="#fff" stroke-width="1"/><path d="M0.8 5.2 H14.4 M0.8 10 H9.6 M7.6 0.6 V14.6" stroke="#fff" stroke-width="1"/><circle cx="12" cy="12" r="4.4" fill="#252525"/><circle cx="12" cy="12" r="3.2" fill="none" stroke="#fff" stroke-width="1"/><path d="M9.8 14.2 L14.2 9.8" stroke="#fff" stroke-width="1"/></svg>
<svg class="i" style="left:1143px;top:772px" width="14" height="15" viewBox="0 0 14 15" ><path d="M0.6 5 H2.6 L6 1.2 V13.4 L2.6 9.6 H0.6 Z" fill="none" stroke="#fff" stroke-width="1"/><path d="M8.6 5 L13.2 9.6 M13.2 5 L8.6 9.6" stroke="#fff" stroke-width="1"/></svg>
<span class="t" style="left:1172.8px;top:763px;color:#fff;letter-spacing:-0.139px;">6:06 AM</span>
<span class="t" style="left:1172.2px;top:781px;color:#fff;letter-spacing:-0.246px;">1/3/2022</span>
<svg class="i" style="left:1239px;top:772px" width="16" height="16" viewBox="0 0 16 16" ><path d="M0.6 0.6 H15 V12 H9.8 L7.8 14.2 L5.8 12 H0.6 Z" fill="none" stroke="#fff" stroke-width="1.1"/></svg>
<div style="left:1275px;top:760px;width:1px;height:40px;background:#4f5560;"></div>
</div>
</body>
</html>
